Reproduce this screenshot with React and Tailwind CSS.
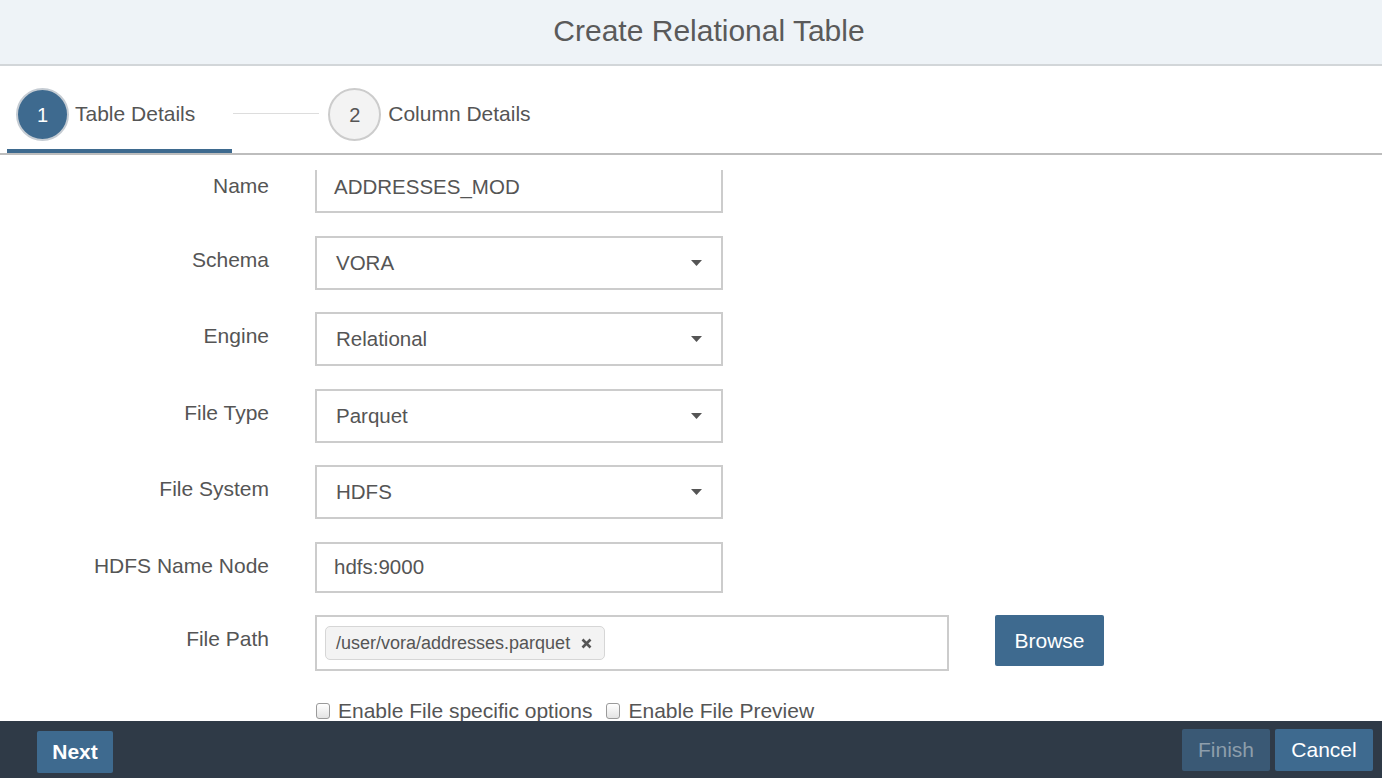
import React from "react";

const font = { fontFamily: '"Liberation Sans", Arial, Helvetica, sans-serif' };

function Caret() {
  return (
    <svg width="11" height="6" viewBox="0 0 11 6" className="shrink-0">
      <path d="M0 0 L11 0 L5.5 6 Z" fill="#555555" />
    </svg>
  );
}

function Label({ children }) {
  return (
    <div className="w-[269px] shrink-0 text-right pt-[12px] text-[21px] leading-[24px] text-[#555555]">
      {children}
    </div>
  );
}

function TextRow({ label, value, h = "h-[51px]", mb }) {
  return (
    <div className={`flex ${mb}`}>
      <Label>{label}</Label>
      <div className={`ml-[46px] w-[408px] ${h} border-2 border-[#cccccc] bg-white flex items-center pl-[17px] text-[20.5px] text-[#555555]`}>
        {value}
      </div>
    </div>
  );
}

function SelectRow({ label, value, mb }) {
  return (
    <div className={`flex ${mb}`}>
      <Label>{label}</Label>
      <div className="ml-[46px] w-[408px] h-[54px] border-2 border-[#cccccc] bg-white flex items-center justify-between pl-[19px] pr-[19px] text-[20.5px] text-[#555555]">
        <span>{value}</span>
        <Caret />
      </div>
    </div>
  );
}

function Checkbox() {
  return (
    <span className="inline-block w-[14px] h-[16px] rounded-[3px] border border-[#9a9a9a] bg-gradient-to-b from-[#ffffff] to-[#e4e4e4] shrink-0" />
  );
}

export default function App() {
  return (
    <div className="w-[1382px] h-[778px] overflow-hidden bg-white flex flex-col" style={font}>
      {/* Header */}
      <div className="h-[66px] shrink-0 bg-[#eef3f7] border-b-2 border-[#d2d6d9] flex items-center justify-center pl-[36px]">
        <h1 className="text-[30px] leading-none text-[#5a5a5a] pb-[3px]">Create Relational Table</h1>
      </div>

      {/* Steps */}
      <div className="relative h-[89px] shrink-0 border-b-2 border-[#bdbdbd] flex items-start pt-[22px] pl-[16px]">
        <div className="w-[53px] h-[53px] rounded-full bg-[#3e6a8f] border-2 border-[#c5ccd3] flex items-center justify-center text-white text-[20px]">
          1
        </div>
        <span className="ml-[6px] mt-[14px] text-[21px] leading-[24px] text-[#555555]">Table Details</span>
        <div className="ml-[38px] mt-[25px] w-[86px] h-px bg-[#dddddd]" />
        <div className="ml-[9px] w-[53px] h-[53px] rounded-full bg-[#f3f3f3] border-2 border-[#cccccc] flex items-center justify-center text-[#555555] text-[20px]">
          2
        </div>
        <span className="ml-[7px] mt-[14px] text-[21px] leading-[24px] text-[#555555]">Column Details</span>
        <div className="absolute left-[7px] bottom-0 w-[225px] h-[4px] bg-[#3e6a8f]" />
      </div>

      <div className="h-[15px] shrink-0 bg-white relative z-10" />

      {/* Form */}
      <div className="flex-1 overflow-hidden">
        <div className="mt-[-8px]">
          <TextRow label="Name" value="ADDRESSES_MOD" mb="mb-[23px]" />
          <SelectRow label="Schema" value="VORA" mb="mb-[22px]" />
          <SelectRow label="Engine" value="Relational" mb="mb-[23px]" />
          <SelectRow label="File Type" value="Parquet" mb="mb-[22px]" />
          <SelectRow label="File System" value="HDFS" mb="mb-[23px]" />
          <TextRow label="HDFS Name Node" value="hdfs:9000" mb="mb-[22px]" />

          <div className="flex">
            <Label>File Path</Label>
            <div className="ml-[46px] w-[634px] h-[56px] border-2 border-[#cccccc] bg-white flex items-center pl-[8px]">
              <div className="h-[34px] rounded-[5px] border border-[#d6d6d6] bg-[#f3f3f3] flex items-center pl-[10px] pr-[12px] text-[18px] text-[#555555]">
                <span>/user/vora/addresses.parquet</span>
                <svg width="11" height="11" viewBox="0 0 11 11" className="ml-[11px]">
                  <path d="M1.5 1.5 L9.5 9.5 M9.5 1.5 L1.5 9.5" stroke="#555555" strokeWidth="2.6" strokeLinecap="butt" />
                </svg>
              </div>
            </div>
            <button className="ml-[46px] w-[109px] h-[51px] rounded-[2px] bg-[#3e6a8f] text-white text-[21px]">
              Browse
            </button>
          </div>

          <div className="flex items-center ml-[316px] mt-[28px] text-[21px] leading-[24px] text-[#555555]">
            <Checkbox />
            <span className="ml-[8px]">Enable File specific options</span>
            <span className="ml-[14px] flex items-center">
              <Checkbox />
              <span className="ml-[8px]">Enable File Preview</span>
            </span>
          </div>
        </div>
      </div>

      {/* Footer */}
      <div className="h-[57px] shrink-0 bg-[#2f3a47] flex items-center justify-between pl-[37px] pr-[9px]">
        <button className="w-[76px] h-[42px] mt-[4px] rounded-[2px] bg-[#3e6a8f] text-white text-[21px] font-bold">
          Next
        </button>
        <div className="flex gap-[5px]">
          <button className="w-[88px] h-[42px] rounded-[2px] bg-[#3a5975] text-[#8d9eab] text-[21px]">
            Finish
          </button>
          <button className="w-[98px] h-[42px] rounded-[2px] bg-[#3e6a8f] text-white text-[21px]">
            Cancel
          </button>
        </div>
      </div>
    </div>
  );
}
